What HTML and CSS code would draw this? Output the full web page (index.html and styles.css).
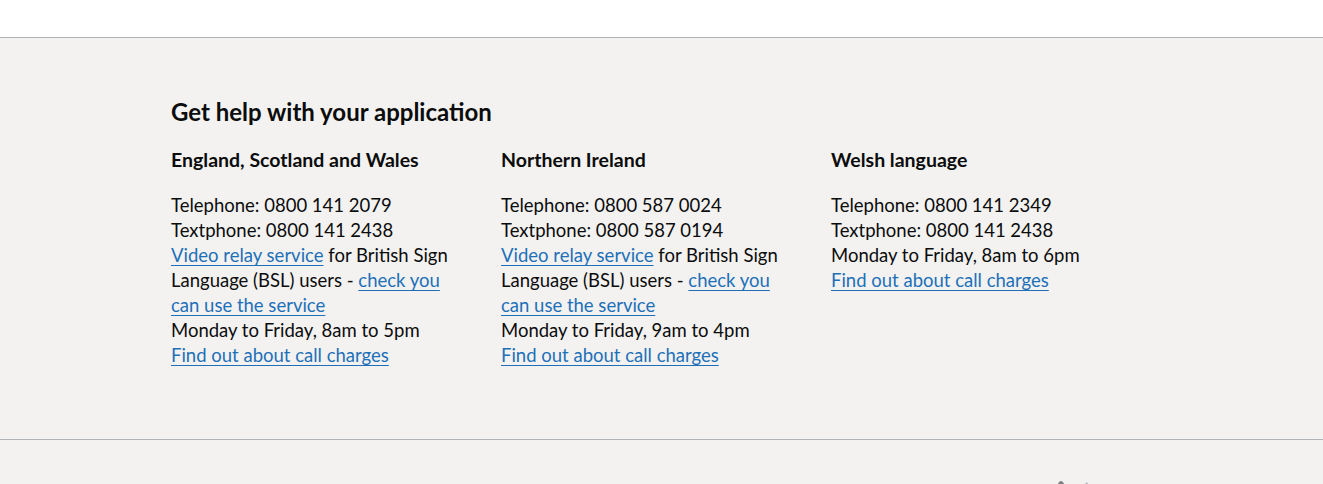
FILE: index.html
```html
<!DOCTYPE html>
<html lang="en">
<head>
<meta charset="utf-8">
<title>Get help with your application</title>
<link rel="stylesheet" href="styles.css">
</head>
<body>
<div class="top"></div>
<footer class="footer">
  <div class="help">
    <div class="container">
      <h2 class="heading-m">Get help with your application</h2>
      <div class="row">
        <div class="col">
          <h3 class="heading-s">England, Scotland and Wales</h3>
          <p class="body">Telephone: 0800 141 2079<br>Textphone: 0800 141 2438<br><a href="#">Video relay service</a> for British Sign Language (BSL) users - <a href="#">check you can use the service</a><br>Monday to Friday, 8am to 5pm<br><a href="#">Find out about call charges</a></p>
        </div>
        <div class="col">
          <h3 class="heading-s">Northern Ireland</h3>
          <p class="body">Telephone: 0800 587 0024<br>Textphone: 0800 587 0194<br><a href="#">Video relay service</a> for British Sign Language (BSL) users - <a href="#">check you can use the service</a><br>Monday to Friday, 9am to 4pm<br><a href="#">Find out about call charges</a></p>
        </div>
        <div class="col">
          <h3 class="heading-s">Welsh language</h3>
          <p class="body">Telephone: 0800 141 2349<br>Textphone: 0800 141 2438<br>Monday to Friday, 8am to 6pm<br><a href="#">Find out about call charges</a></p>
        </div>
      </div>
    </div>
  </div>
  <div class="meta">
    <div class="crest" aria-hidden="true">
      <svg width="40" height="10" viewBox="0 0 40 10"><path d="M1 5 C1 2 3 1 4 1 C5 1 7 2 7 5 Z" fill="#7d8082"/><path d="M28 4 L30 2 L31 4 Z" fill="#b1b4b6"/></svg>
    </div>
  </div>
</footer>
</body>
</html>
```
FILE: styles.css
```css
html, body {
  margin: 0;
  padding: 0;
  background: #ffffff;
}
body {
  font-family: Lato, "Liberation Sans", Arial, sans-serif;
  color: #0b0c0c;
}
.top {
  height: 37px;
  background: #ffffff;
}
.footer {
  background: #f3f2f1;
  border-top: 1px solid #b1b4b6;
}
.help {
  padding-top: 59px;
  padding-bottom: 51px;
  border-bottom: 1px solid #b1b4b6;
}
.container {
  max-width: 981px;
  margin: 0 auto;
}
.heading-m {
  font-size: 24px;
  line-height: 30px;
  font-weight: 700;
  margin: 0 0 20px;
}
.row {
  display: grid;
  grid-template-columns: 330px 330px 330px;
}
.col {
  padding-right: 30px;
}
.heading-s {
  font-size: 19.5px;
  line-height: 25px;
  font-weight: 700;
  margin: 0 0 21px;
}
.body {
  font-size: 18.5px;
  line-height: 25px;
  margin: 0 0 20px;
}
.body a {
  color: #1d70b8;
  text-decoration: underline;
  text-decoration-thickness: 1px;
  text-underline-offset: 0.15em;
}
.meta {
  height: 60px;
  display: flex;
  justify-content: flex-start;
  padding-top: 40px;
  box-sizing: border-box;
}
.crest {
  margin-left: 1057px;
}
.crest svg {
  display: block;
}
```
